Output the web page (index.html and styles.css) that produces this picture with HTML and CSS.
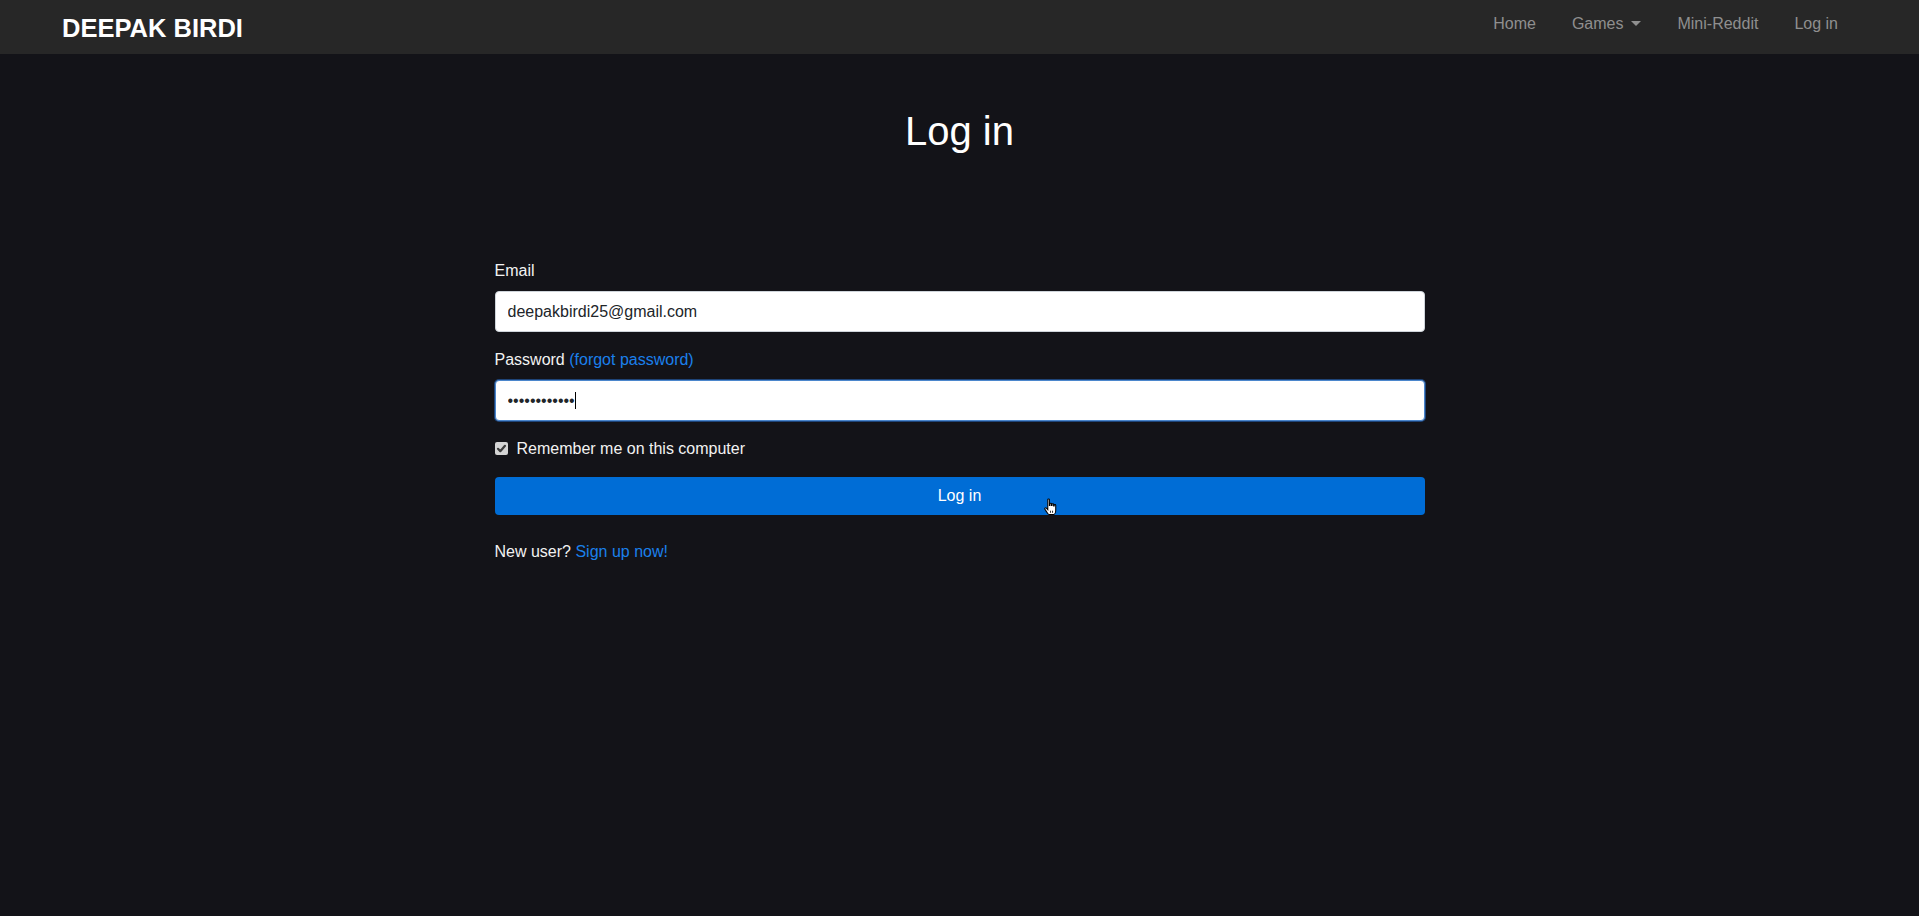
FILE: index.html
```html
<!DOCTYPE html>
<html lang="en">
<head>
<meta charset="utf-8">
<title>Log in | Deepak Birdi</title>
<link rel="stylesheet" href="styles.css">
</head>
<body>
<header class="navbar">
  <a class="brand" href="#">DEEPAK BIRDI</a>
  <nav class="nav-links">
    <a class="nav-link" href="#">Home</a>
    <a class="nav-link dropdown" href="#">Games<span class="caret"></span></a>
    <a class="nav-link" href="#">Mini-Reddit</a>
    <a class="nav-link" href="#">Log in</a>
  </nav>
</header>
<main class="page">
  <h1 class="title">Log in</h1>
  <form class="login-form">
    <div class="group">
      <label class="label" for="email">Email</label>
      <input class="field" id="email" type="email" value="deepakbirdi25@gmail.com">
    </div>
    <div class="group">
      <label class="label" for="password">Password <a class="link" href="#">(forgot password)</a></label>
      <div class="field-wrap">
        <input class="field focused" id="password" type="password" value="abcdefghijkl">
        <span class="text-caret"></span>
      </div>
    </div>
    <div class="group check-row">
      <span class="checkbox"><svg viewBox="0 0 13 13" width="13" height="13"><path d="M3 6.8 L5.3 9.2 L10 3.8" fill="none" stroke="#3c3c3c" stroke-width="2.2" stroke-linecap="round" stroke-linejoin="round"/></svg></span>
      <span class="check-label">Remember me on this computer</span>
    </div>
    <div class="btn-wrap">
      <button class="btn" type="button">Log in</button>
      <svg class="hand" viewBox="0 0 16 17" width="17" height="18"><path d="M4.5 1.5 C4.5 0.7 6 0.7 6 1.5 L6 7 L6.5 7 L6.5 5.5 C6.5 4.8 8 4.8 8 5.5 L8 7 L8.5 7 L8.5 6 C8.5 5.3 10 5.3 10 6 L10 7.5 L10.5 7.5 L10.5 6.8 C10.5 6.1 12 6.1 12 6.8 L12 11.5 C12 13.5 11 15.5 10 15.5 L5.5 15.5 C4.5 15.5 3.5 13 2 11 C1 9.7 2.3 8.8 3.2 9.6 L4.5 11 Z" fill="#fff" stroke="#000" stroke-width="1"/><path d="M7 12 V14 M9 12 V14" stroke="#000" stroke-width="0.8"/></svg>
    </div>
    <p class="signup">New user? <a class="link" href="#">Sign up now!</a></p>
  </form>
</main>
</body>
</html>
```
FILE: styles.css
```css
html, body {
  margin: 0;
  padding: 0;
}
html {
  background: #131318;
}
body {
  background: #131318;
  color: #f2f2f2;
  font-family: "Liberation Sans", Arial, sans-serif;
  font-size: 16px;
  line-height: 24px;
}
a {
  text-decoration: none;
}
.navbar {
  height: 54px;
  background: #272727;
  display: flex;
  justify-content: space-between;
  align-items: flex-start;
  padding: 0 81px 0 62px;
  box-sizing: border-box;
}
.brand {
  margin-top: 10px;
  font-size: 25.5px;
  line-height: 37px;
  font-weight: 700;
  color: #fff;
}
.nav-links {
  display: flex;
  margin-top: 12px;
}
.nav-link {
  color: #8f8f8f;
  padding: 0 18px;
  line-height: 24px;
  display: flex;
  align-items: center;
}
.nav-link:last-child {
  padding-right: 0;
}
.caret {
  display: inline-block;
  width: 0;
  height: 0;
  margin-left: 8px;
  margin-top: -2px;
  border-top: 5px solid #8f8f8f;
  border-left: 5px solid transparent;
  border-right: 5px solid transparent;
}
.page {
  display: flex;
  flex-direction: column;
  align-items: center;
}
.title {
  margin: 53px 0 0;
  font-size: 40px;
  line-height: 48px;
  font-weight: 400;
  color: #fff;
}
.login-form {
  width: 930px;
  margin-top: 104px;
}
.group {
  margin-bottom: 16px;
}
.label {
  display: block;
  margin-bottom: 8px;
}
.link {
  color: #1b80ec;
}
.field-wrap {
  position: relative;
}
.field {
  display: block;
  width: 100%;
  height: 41px;
  box-sizing: border-box;
  padding: 0 12px;
  border: 1px solid #ced4da;
  border-radius: 4px;
  background: #fff;
  color: #212529;
  font-family: "Liberation Sans", Arial, sans-serif;
  font-size: 16px;
  outline: none;
}
.field.focused {
  border-color: #4b86cc;
  box-shadow: 0 0 0 1px rgba(40, 110, 200, 0.55);
}
.text-caret {
  position: absolute;
  left: 80px;
  top: 12px;
  width: 1px;
  height: 17px;
  background: #000;
}
.check-row {
  display: flex;
  align-items: flex-start;
  gap: 9px;
}
.checkbox {
  width: 13px;
  height: 13px;
  margin-top: 5px;
  border-radius: 2px;
  background: #d4d4d4;
  display: flex;
}
.btn-wrap {
  position: relative;
}
.btn {
  display: block;
  width: 100%;
  height: 38px;
  border: none;
  border-radius: 4px;
  background: #006dd6;
  color: #fff;
  font-family: "Liberation Sans", Arial, sans-serif;
  font-size: 16px;
  line-height: 24px;
  cursor: pointer;
}
.hand {
  position: absolute;
  left: 548px;
  top: 21px;
}
.signup {
  margin: 25px 0 0;
}
```
